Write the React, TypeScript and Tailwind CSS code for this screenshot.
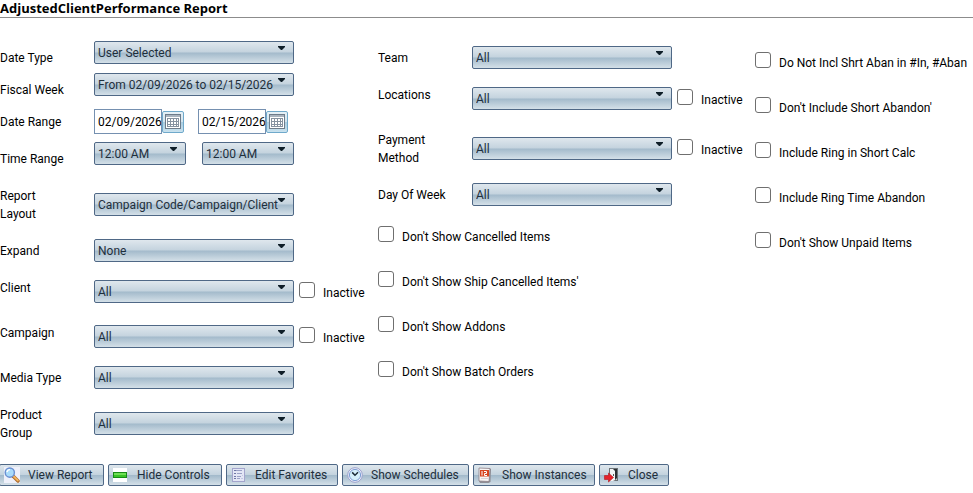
import React, { useId } from 'react';

const GLASS = 'rounded-xs border border-[#4f6886] bg-linear-[180deg,#dfe7ed_0%,#c4d3de_48%,#a3bacb_52%,#d4e0e8_100%]';

function Select({ value, label, id, width = 'w-[200px]' }: { value: string; label?: string; id?: string; width?: string }) {
  return (
    <div className={`relative shrink-0 ${width}`}>
      <select
        id={id}
        aria-label={label}
        defaultValue={value}
        className={`block h-[23px] w-full appearance-none pl-[3px] pr-0 text-[#1e2f3c] ${GLASS}`}
      >
        <option>{value}</option>
      </select>
      <svg className="pointer-events-none absolute right-[9px] top-[5px] h-1 w-[7px]" viewBox="0 0 7 4">
        <path d="M0 0h7v1L4 4H3L0 1z" fill="#0f1e28" />
      </svg>
    </div>
  );
}

function CheckOption({ label }: { label: string }) {
  return (
    <label className="flex h-[45px] items-start gap-2 whitespace-nowrap">
      <input type="checkbox" className="mt-[11px] size-4 shrink-0 appearance-none rounded-[3px] border border-[#6f6f6f] bg-white checked:bg-[#0067c0]" />
      <span className="mt-[13px]">{label}</span>
    </label>
  );
}

function Row({ label, id, tight, children }: { label: string; id?: string; tight?: boolean; children: React.ReactNode }) {
  return (
    <div className={`flex ${tight ? 'items-start' : ''}`}>
      <div className="w-[94px] shrink-0 pb-[11px] pr-5 pt-2">
        <label htmlFor={id}>{label}</label>
      </div>
      <div className={`flex ${tight ? '' : 'items-center'}`}>{children}</div>
    </div>
  );
}

function SelectRow({ label, value, inactive }: { label: string; value: string; inactive?: boolean }) {
  const id = useId();
  return (
    <Row label={label} id={id}>
      <div className="pb-1">
        <Select id={id} value={value} />
      </div>
      {inactive && (
        <div className="pl-[5px]">
          <CheckOption label="Inactive" />
        </div>
      )}
    </Row>
  );
}

function DateField({ value, id, label }: { value: string; id?: string; label?: string }) {
  return (
    <div className="flex items-center">
      <input id={id} aria-label={label} defaultValue={value} className="h-[25px] w-[68px] border border-[#7590b0] bg-white pl-[3px] text-black" />
      <button
        type="button"
        aria-label="Open calendar"
        className="flex size-[22px] items-center justify-center rounded-xs border border-[#6fa9cb] bg-linear-[180deg,#e6f1f7_0%,#d3e5ef_49%,#a9cce0_50%,#c9e2ef_100%]"
      >
        <svg className="size-4" viewBox="0 0 16 16" shapeRendering="crispEdges">
          <rect x="0" y="0" width="16" height="15" fill="#6d7b8a" />
          <rect x="1" y="1" width="14" height="2" fill="#a9b4bf" />
          <rect x="1" y="3" width="14" height="11" fill="#fff" />
          <path
            d="M2 4.5h12M2 7.5h12M2 10.5h12M2 12.5h12M2.5 4v9M5.5 4v9M8.5 4v9M11.5 4v9M13.5 4v9"
            stroke="#8592a0"
            strokeWidth="1"
          />
        </svg>
      </button>
    </div>
  );
}

const SearchIcon = () => (
  <svg className="size-4" viewBox="0 0 16 16">
    <rect width="16" height="16" fill="#eef0fa" />
    <path d="M9 9l5 5" stroke="#a9672c" strokeWidth="3.4" strokeLinecap="round" />
    <path d="M9.3 9l4.6 4.5" stroke="#f2b45c" strokeWidth="1.8" strokeLinecap="round" />
    <circle cx="5.8" cy="5.6" r="4.6" fill="#a9dbfa" stroke="#6a8fd0" strokeWidth="1.4" />
    <path d="M3 5.2a3 3 0 0 1 3-2.6" stroke="#fff" strokeWidth="1.4" fill="none" />
  </svg>
);

const BarIcon = () => (
  <svg className="size-4" viewBox="0 0 16 16" shapeRendering="crispEdges">
    <rect x="0" y="1" width="14" height="14" fill="#fff" />
    <rect x="0" y="5" width="14" height="6" fill="#178a17" />
    <rect x="1" y="6" width="12" height="4" fill="#39c426" />
    <rect x="1" y="6" width="12" height="2" fill="#6fdf55" />
  </svg>
);

const FormIcon = () => (
  <svg className="size-4" viewBox="0 0 16 16" shapeRendering="crispEdges">
    <rect x="1" y="1" width="13" height="14" fill="#a3a5cc" />
    <rect x="2" y="2" width="11" height="12" fill="#e3e6f5" />
    <path d="M3 3.5h8M6 6.5h5M6 9.5h4M6 11.5h3" stroke="#9aa1c6" />
    <path d="M3 3.5h2M3 6.5h2M3 9.5h2M3 11.5h2" stroke="#6f78a6" />
    <path d="M10 11.5h2M11 8.5h1" stroke="#c3c7e2" />
  </svg>
);

const ClockIcon = () => (
  <svg className="size-4" viewBox="0 0 16 16">
    <circle cx="8" cy="8" r="7.3" fill="#f3f4fd" stroke="#9a9fcc" strokeWidth="1" />
    <circle cx="8" cy="8" r="5.6" fill="#d5f0fb" stroke="#7f9fd4" strokeWidth="1" />
    <path d="M5.2 5.4L8 8.2l3-2.9" stroke="#1d2c38" strokeWidth="1.5" fill="none" />
  </svg>
);

const CalendarIcon = () => (
  <svg className="size-4" viewBox="0 0 16 16">
    <path d="M11 1l2 1-.5 13-2 1H2l-1-2z" fill="#8e8e96" />
    <path d="M1 1l11 .5L11 14.5 1 14z" fill="#f7f4f4" stroke="#8b7f86" strokeWidth=".8" />
    <path d="M2 3h9v6.500H2z" fill="#d8441f" />
    <path d="M4 4v4.500M6 4.500h2.500v2H6.500v2H9" stroke="#fff" strokeWidth="1" fill="none" />
    <path d="M3 11.500h7" stroke="#d9d2d6" strokeWidth="1" />
  </svg>
);

const ExitIcon = () => (
  <svg className="size-4" viewBox="0 0 16 16">
    <path d="M5 1h9v13H5z" fill="#6b7276" />
    <path d="M6 2h7v11H6z" fill="#c9ced1" />
    <path d="M8 2h5v9l-2 2V5z" fill="#2b3033" />
    <path d="M6 2h3l2 2v9l-2 1H6z" fill="#f2f4f5" />
    <path d="M9 7h1v2H9z" fill="#555" />
    <path d="M.5 8.500h4V6l5 4.500-5 4.500v-2.500h-4z" fill="#e5222a" stroke="#b3161d" strokeWidth=".6" />
  </svg>
);

// the first button is cut by the left page edge
const ACTIONS = [
  { label: 'View Report',    width: 'w-[105px] -ml-px', icon: <SearchIcon /> },
  { label: 'Hide Controls',  width: 'w-[114px]', icon: <BarIcon /> },
  { label: 'Edit Favorites', width: 'w-[112px]', icon: <FormIcon /> },
  { label: 'Show Schedules', width: 'w-[127px]', icon: <ClockIcon /> },
  { label: 'Show Instances', width: 'w-[122px]', icon: <CalendarIcon /> },
  { label: 'Close',          width: 'w-[70px]',  icon: <ExitIcon /> },
];

const ITEM_FLAGS = [
  "Don't Show Cancelled Items",
  "Don't Show Ship Cancelled Items'",
  "Don't Show Addons",
  "Don't Show Batch Orders",
];

const CALL_FLAGS = [
  'Do Not Incl Shrt Aban in #In, #Aban',
  "Don't Include Short Abandon'",
  'Include Ring in Short Calc',
  'Include Ring Time Abandon',
  "Don't Show Unpaid Items",
];

export default function App() {
  return (
    <div className="overflow-x-hidden bg-white font-[Roboto,sans-serif] text-[12px] leading-[18px] text-black">
      <h1 className="h-[18px] border-b border-[#8c8c8c] font-['Open_Sans',sans-serif] text-[13px] font-bold leading-4">
        AdjustedClientPerformance Report
      </h1>

      <form onSubmit={e => e.preventDefault()}>
        <div className="grid grid-cols-[378px_377px_1fr] pt-[23px]">
          <div>
            {/* Dates */}
            <div className="h-8">
              <Row label="Date Type" id="date-type" tight>
                <Select id="date-type" value="User Selected" />
              </Row>
            </div>
            <div className="h-8">
              <Row label="Fiscal Week" id="fiscal-week" tight>
                <Select id="fiscal-week" value="From 02/09/2026 to 02/15/2026" />
              </Row>
            </div>
            <Row label="Date Range" id="date-from">
              <div className="flex gap-3.5 pb-1">
                <DateField id="date-from" value="02/09/2026" />
                <DateField label="Date to" value="02/15/2026" />
              </div>
            </Row>
            <Row label="Time Range" id="time-from" tight>
              <div className="flex gap-4">
                <Select id="time-from" value="12:00 AM" width="w-[92px]" />
                <Select label="Time to" value="12:00 AM" width="w-[92px]" />
              </div>
            </Row>

            {/* Grouping */}
            <SelectRow label="Report Layout" value="Campaign Code/Campaign/Client" />
            <SelectRow label="Expand" value="None" />
            <SelectRow label="Client" value="All" inactive />
            <SelectRow label="Campaign" value="All" inactive />
            <SelectRow label="Media Type" value="All" />
            <SelectRow label="Product Group" value="All" />
          </div>

          <div>
            <SelectRow label="Team" value="All" />
            <SelectRow label="Locations" value="All" inactive />
            <SelectRow label="Payment Method" value="All" inactive />
            <SelectRow label="Day Of Week" value="All" />
            {ITEM_FLAGS.map(flag => <CheckOption key={flag} label={flag} />)}
          </div>

          <div>
            {CALL_FLAGS.map(flag => <CheckOption key={flag} label={flag} />)}
          </div>
        </div>

        {/* Actions */}
        <div className="flex gap-1 pt-[11px]">
          {ACTIONS.map(action => (
            <button
              key={action.label}
              type="button"
              className={`flex h-[22px] shrink-0 items-center gap-2 whitespace-nowrap pl-1 text-[#1e2f3c] ${GLASS} ${action.width}`}
            >
              {action.icon}
              {action.label}
            </button>
          ))}
        </div>
      </form>
    </div>
  );
}
